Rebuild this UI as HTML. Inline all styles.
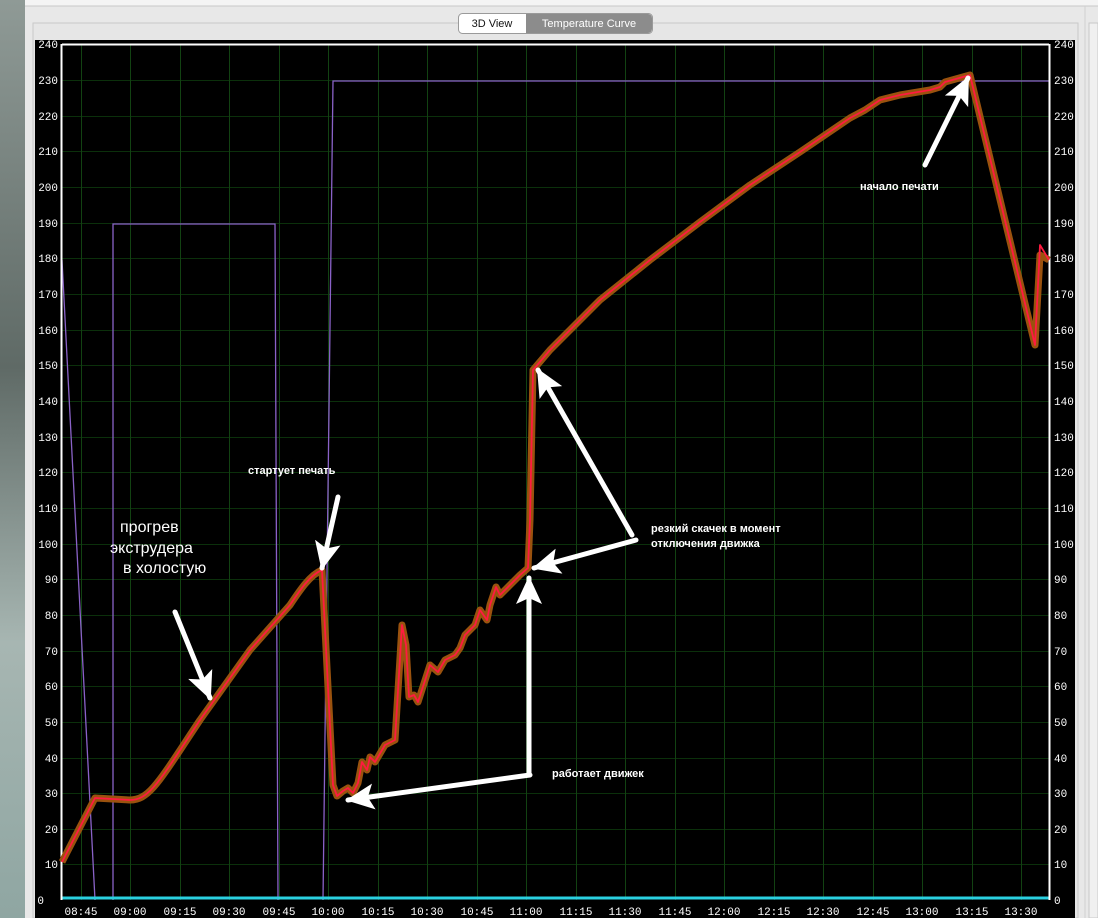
<!DOCTYPE html>
<html><head><meta charset="utf-8"><style>
html,body{margin:0;padding:0;width:1098px;height:918px;overflow:hidden;background:#e8e8e8;font-family:"Liberation Sans",sans-serif}
</style></head><body>
<svg width="1098" height="918" viewBox="0 0 1098 918" xmlns="http://www.w3.org/2000/svg" style="position:absolute;left:0;top:0">
<defs>
<linearGradient id="lg" x1="0" y1="0" x2="0" y2="1"><stop offset="0" stop-color="#8f9a96"/><stop offset="0.4" stop-color="#5f6a66"/><stop offset="0.7" stop-color="#a7b6b2"/><stop offset="1" stop-color="#8fa6a2"/></linearGradient>
<marker id="ah" markerUnits="userSpaceOnUse" markerWidth="30" markerHeight="30" refX="26" refY="13" orient="auto"><path d="M0,0 L28,13 L0,26 L6,13 Z" fill="#fff"/></marker>
</defs>
<rect x="0" y="0" width="25" height="918" fill="url(#lg)"/>
<rect x="25" y="0" width="1073" height="6" fill="#f4f4f4"/>
<line x1="25" y1="6" x2="1098" y2="6" fill="none" stroke="#c8c8c8"/>
<rect x="33" y="23" width="1045" height="895" fill="#e6e6e6" stroke="#c8c8c8"/>
<line x1="1085" y1="6" x2="1085" y2="918" stroke="#cfcfcf"/>
<rect x="1089" y="23" width="9" height="895" fill="#f0f0f0" stroke="#c8c8c8"/>
<rect x="458.500" y="13.500" width="194" height="20" rx="4" fill="#fff" stroke="#9a9a9a"/>
<path d="M526,14 H648 a4,4 0 0 1 4,4 V29 a4,4 0 0 1 -4,4 H526 Z" fill="#8c8c8c"/>
<text x="492" y="27" font-size="11" text-anchor="middle" fill="#111">3D View</text>
<text x="589" y="27" font-size="11" text-anchor="middle" fill="#fff">Temperature Curve</text>
<rect x="35" y="40" width="1040" height="878" fill="#000"/>
<g stroke="#0b300b" stroke-width="1">
<path d="M62,44.500H1049M62,80.500H1049M62,116.500H1049M62,151.500H1049M62,187.500H1049M62,223.500H1049M62,258.500H1049M62,294.500H1049M62,330.500H1049M62,365.500H1049M62,401.500H1049M62,437.500H1049M62,472.500H1049M62,508.500H1049M62,544.500H1049M62,579.500H1049M62,615.500H1049M62,651.500H1049M62,686.500H1049M62,722.500H1049M62,758.500H1049M62,793.500H1049M62,829.500H1049M62,864.500H1049"/>
<path d="M81.500,44V900M130.500,44V900M180.500,44V900M229.500,44V900M279.500,44V900M328.500,44V900M378.500,44V900M427.500,44V900M477.500,44V900M526.500,44V900M576.500,44V900M625.500,44V900M675.500,44V900M724.500,44V900M774.500,44V900M823.500,44V900M873.500,44V900M922.500,44V900M972.500,44V900M1021.500,44V900" stroke="#124212"/>
</g>
<path d="M62,260 L95,900 M113,900 V224 H275 L278,900 M323,900 L333,81 H1049" fill="none" stroke="#8a62c8" stroke-width="1.3"/>
<line x1="62" y1="898" x2="1049" y2="898" stroke="#2ad0e0" stroke-width="3"/>
<path d="M62,44.500H1049M61.500,44V900M1049.500,44V900" stroke="#fff" stroke-width="2" fill="none"/>
<g>
<path d="M62,862 L95,798 L130,800 C150,800 160,780 200,720 L250,650 L290,605 C300,590 310,575 322,570 L333,785 L337,796 L343,791 L348,788 L353,793 L358,783 L362,762 L367,770 L370,757 L375,762 L385,745 L395,740 L402,625 L406,645 L409,697 L414,695 L418,702 L430,665 L438,672 L445,660 L455,655 L460,648 L465,635 L475,625 L480,610 L487,620 L490,605 L496,587 L500,595 L505,590 L512,583 L520,575 L528,568 L530,520 L533,370 L550,350 L600,300 L650,260 L700,222 L750,185 L800,152 L850,118 L865,110 L880,100 L900,95 L930,90 L940,87 L945,82 L970,75 L1035,345 L1040,255 L1049,260" fill="none" stroke="#9a520e" stroke-width="7" stroke-linejoin="round"/>
<path d="M62,862 L95,798 L130,800 C150,800 160,780 200,720 L250,650 L290,605 C300,590 310,575 322,570 L333,785 L337,796 L343,791 L348,788 L353,793 L358,783 L362,762 L367,770 L370,757 L375,762 L385,745 L395,740 L402,625 L406,645 L409,697 L414,695 L418,702 L430,665 L438,672 L445,660 L455,655 L460,648 L465,635 L475,625 L480,610 L487,620 L490,605 L496,587 L500,595 L505,590 L512,583 L520,575 L528,568 L530,520 L533,370 L550,350 L600,300 L650,260 L700,222 L750,185 L800,152 L850,118 L865,110 L880,100 L900,95 L930,90 L940,87 L945,82 L970,75 L1035,345 L1040,245 L1049,260" fill="none" stroke="#ff1a40" stroke-width="1.8" stroke-linejoin="round"/>
</g>
<g stroke="#fff" stroke-width="5" fill="none" marker-end="url(#ah)" stroke-linecap="round">
<line x1="175" y1="612" x2="210" y2="698"/>
<line x1="338" y1="497" x2="322" y2="568"/>
<line x1="632" y1="535" x2="538" y2="370"/>
<line x1="636" y1="540" x2="534" y2="568"/>
<line x1="530" y1="775" x2="348" y2="800"/>
<line x1="529" y1="775" x2="529" y2="578"/>
<line x1="925" y1="165" x2="968" y2="78"/>
</g>
<g font-family="Liberation Mono,monospace" font-size="11" fill="#fff">
<g text-anchor="end">
<text x="58" y="48">240</text><text x="58" y="84">230</text><text x="58" y="120">220</text><text x="58" y="155">210</text><text x="58" y="191">200</text><text x="58" y="227">190</text><text x="58" y="262">180</text><text x="58" y="298">170</text><text x="58" y="334">160</text><text x="58" y="369">150</text><text x="58" y="405">140</text><text x="58" y="441">130</text><text x="58" y="476">120</text><text x="58" y="512">110</text><text x="58" y="548">100</text><text x="58" y="583">90</text><text x="58" y="619">80</text><text x="58" y="655">70</text><text x="58" y="690">60</text><text x="58" y="726">50</text><text x="58" y="762">40</text><text x="58" y="797">30</text><text x="58" y="833">20</text><text x="58" y="868">10</text><text x="44" y="904">0</text>
</g>
<g>
<text x="1054" y="48">240</text><text x="1054" y="84">230</text><text x="1054" y="120">220</text><text x="1054" y="155">210</text><text x="1054" y="191">200</text><text x="1054" y="227">190</text><text x="1054" y="262">180</text><text x="1054" y="298">170</text><text x="1054" y="334">160</text><text x="1054" y="369">150</text><text x="1054" y="405">140</text><text x="1054" y="441">130</text><text x="1054" y="476">120</text><text x="1054" y="512">110</text><text x="1054" y="548">100</text><text x="1054" y="583">90</text><text x="1054" y="619">80</text><text x="1054" y="655">70</text><text x="1054" y="690">60</text><text x="1054" y="726">50</text><text x="1054" y="762">40</text><text x="1054" y="797">30</text><text x="1054" y="833">20</text><text x="1054" y="868">10</text><text x="1054" y="904">0</text>
</g>
<g text-anchor="middle">
<text x="81" y="915">08:45</text><text x="130" y="915">09:00</text><text x="180" y="915">09:15</text><text x="229" y="915">09:30</text><text x="279" y="915">09:45</text><text x="328" y="915">10:00</text><text x="378" y="915">10:15</text><text x="427" y="915">10:30</text><text x="477" y="915">10:45</text><text x="526" y="915">11:00</text><text x="576" y="915">11:15</text><text x="625" y="915">11:30</text><text x="675" y="915">11:45</text><text x="724" y="915">12:00</text><text x="774" y="915">12:15</text><text x="823" y="915">12:30</text><text x="873" y="915">12:45</text><text x="922" y="915">13:00</text><text x="972" y="915">13:15</text><text x="1021" y="915">13:30</text>
</g>
</g>
<g fill="#fff" font-family="Liberation Sans,DejaVu Sans,sans-serif">
<text x="120" y="532" font-size="16">прогрев</text>
<text x="110" y="553" font-size="16">экструдера</text>
<text x="123" y="573" font-size="16">в холостую</text>
<g font-size="11" font-weight="bold">
<text x="248" y="474">стартует печать</text>
<text x="651" y="532">резкий скачек в момент</text>
<text x="651" y="547">отключения движка</text>
<text x="552" y="777">работает движек</text>
<text x="860" y="190">начало печати</text>
</g>
</g>
</svg>
</body></html>
